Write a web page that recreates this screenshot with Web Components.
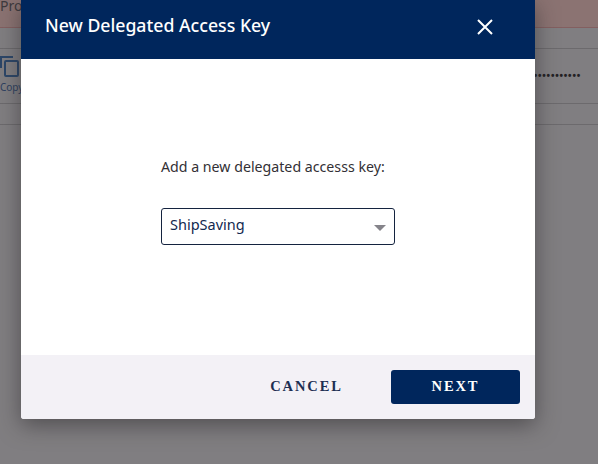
<!DOCTYPE html>
<html>
<head>
<meta charset="utf-8">
<title>New Delegated Access Key</title>
<style>
  html, body { margin: 0; height: 100%; overflow: hidden; background: #807e81; }
  body { font-family: "Noto Sans", sans-serif; }
</style>
</head>
<body>
<back-page>
  <span slot="alert">Pro</span>
  <span slot="copy">Copy</span>
</back-page>
<scrim-layer>
  <key-modal heading="New Delegated Access Key">
    <key-select label="Add a new delegated accesss key:" value="ShipSaving"></key-select>
    <modal-button slot="actions">CANCEL</modal-button>
    <modal-button slot="actions" primary>NEXT</modal-button>
  </key-modal>
</scrim-layer>

<script>
  class BackPage extends HTMLElement {
    constructor() {
      super();
      this.attachShadow({ mode: "open" });
      this.shadowRoot.innerHTML = `
        <style>
          :host { display: block; height: 464px; background: #807e81; color: #3d3a3e; }
          .alert {
            height: 28px;
            box-sizing: border-box;
            background: #8b7372;
            border-bottom: 1px solid #835f60;
            font-size: 14px;
            line-height: 12px;
          }
          .row {
            display: flex;
            justify-content: space-between;
            height: 54px;
            margin-top: 20px;
            border-top: 1px solid #6c6a6d;
            border-bottom: 1px solid #6c6a6d;
          }
          .copy {
            display: flex;
            flex-direction: column;
            align-items: flex-start;
            padding-top: 6px;
            color: #2c3f5f;
            font-size: 10px;
            line-height: 12px;
          }
          .copy svg { display: block; margin-bottom: 4px; }
          .dots {
            margin: 23px 17px 0 0;
            font: bold 10px/8px "Liberation Sans", sans-serif;
            letter-spacing: 0.8px;
            color: #232124;
          }
          .rule { height: 20px; border-bottom: 1px solid #6c6a6d; }
        </style>
        <div class="alert"><slot name="alert"></slot></div>
        <div class="row">
          <div class="copy">
            <svg width="20" height="22" viewBox="0 0 20 22" fill="none" stroke="#2c4668" stroke-width="2">
              <path d="M1 13V2h12"/>
              <rect x="5" y="6" width="13" height="15" rx="1"/>
            </svg>
            <slot name="copy"></slot>
          </div>
          <div class="dots">••••••••••••</div>
        </div>
        <div class="rule"></div>
      `;
    }
  }
  customElements.define("back-page", BackPage);

  class ScrimLayer extends HTMLElement {
    constructor() {
      super();
      this.attachShadow({ mode: "open" });
      this.shadowRoot.innerHTML = `
        <style>
          :host { position: absolute; left: 21px; top: 0; display: block; width: 514px; height: 419px; }
        </style>
        <slot></slot>
      `;
    }
  }
  customElements.define("scrim-layer", ScrimLayer);

  class KeyModal extends HTMLElement {
    constructor() {
      super();
      this.attachShadow({ mode: "open" });
    }

    connectedCallback() {
      const heading = this.getAttribute("heading") || "";
      this.shadowRoot.innerHTML = `
        <style>
          :host {
            display: flex;
            flex-direction: column;
            height: 100%;
            background: #fff;
            border-radius: 0 0 3px 3px;
            box-shadow: 0 6px 22px rgba(40, 38, 40, 0.55);
            overflow: hidden;
          }
          header {
            flex: 0 0 59px;
            display: flex;
            align-items: center;
            justify-content: space-between;
            box-sizing: border-box;
            padding: 0 42px 0 24px;
            background: #00265c;
            color: #fff;
          }
          h2 { margin: 0 0 9px; font-size: 17.7px; line-height: 24px; font-weight: 500; white-space: nowrap; }
          svg { display: block; margin-bottom: 5px; }
          main {
            flex: 1;
            display: flex;
            justify-content: center;
            padding-top: 98px;
          }
          footer {
            flex: 0 0 64px;
            display: flex;
            align-items: flex-start;
            justify-content: flex-end;
            box-sizing: border-box;
            padding: 15px 15px 0 0;
            background: #f3f1f6;
          }
        </style>
        <header>
          <h2>${heading}</h2>
          <svg width="16" height="16" viewBox="0 0 16 16" stroke="#fff" stroke-width="2" fill="none">
            <path d="M1 1l14 14M15 1L1 15"/>
          </svg>
        </header>
        <main><slot></slot></main>
        <footer><slot name="actions"></slot></footer>
      `;
    }
  }
  customElements.define("key-modal", KeyModal);

  class KeySelect extends HTMLElement {
    constructor() {
      super();
      this.attachShadow({ mode: "open" });
    }

    connectedCallback() {
      const label = this.getAttribute("label") || "";
      const value = this.getAttribute("value") || "";
      this.shadowRoot.innerHTML = `
        <style>
          :host { display: block; width: 234px; }
          p {
            margin: 0 0 31px;
            font-size: 14.2px;
            line-height: 20px;
            color: #333035;
            white-space: nowrap;
          }
          .box {
            display: flex;
            align-items: center;
            justify-content: space-between;
            height: 37px;
            box-sizing: border-box;
            padding: 0 8px 0 8px;
            border: 1px solid #14233f;
            border-radius: 3px;
            color: #12284f;
            font-size: 14.5px;
          }
          .value { position: relative; top: -3px; }
          .arrow {
            width: 0;
            height: 0;
            margin-top: 2px;
            border-left: 6px solid transparent;
            border-right: 6px solid transparent;
            border-top: 6px solid #85848a;
          }
        </style>
        <p>${label}</p>
        <div class="box"><span class="value">${value}</span><span class="arrow"></span></div>
      `;
    }
  }
  customElements.define("key-select", KeySelect);

  class ModalButton extends HTMLElement {
    constructor() {
      super();
      this.attachShadow({ mode: "open" });
      this.shadowRoot.innerHTML = `
        <style>
          :host {
            display: flex;
            align-items: center;
            justify-content: center;
            width: 129px;
            height: 32px;
            padding-bottom: 2px;
            box-sizing: content-box;
            margin-left: 14px;
            border-radius: 3px;
            font: bold 14.5px/1 "Liberation Serif", serif;
            letter-spacing: 1.9px;
            color: #1c2e52;
          }
          :host([primary]) { background: #00265c; color: #fff; }
          :host(:not([primary])) { width: 141px; }
        </style>
        <slot></slot>
      `;
    }
  }
  customElements.define("modal-button", ModalButton);
</script>
</body>
</html>
